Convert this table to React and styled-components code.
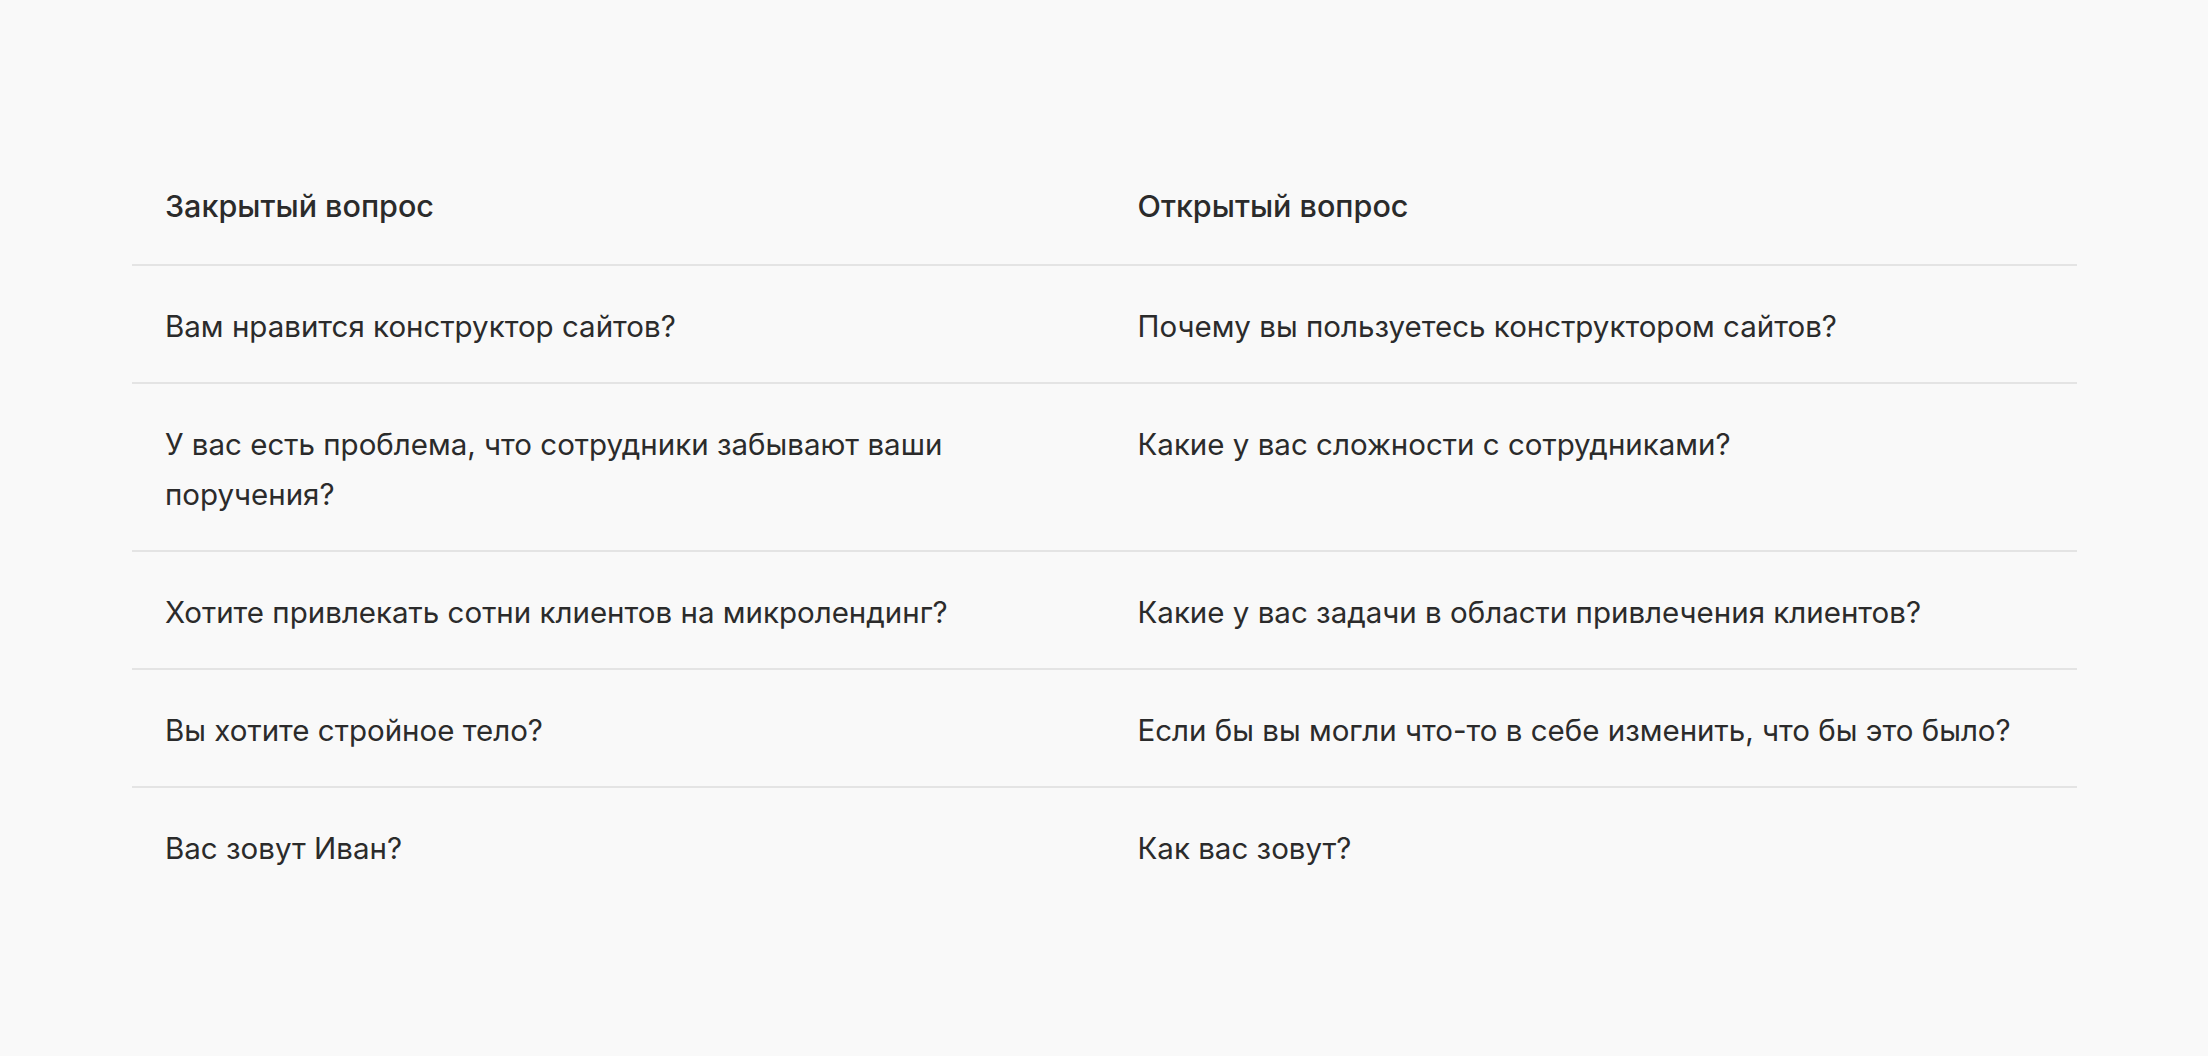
import React from 'react';
import styled, { createGlobalStyle } from 'styled-components';

const rows = [
  ['Вам нравится конструктор сайтов?', 'Почему вы пользуетесь конструктором сайтов?'],
  [
    <>У вас есть проблема, что сотрудники забывают ваши<br />поручения?</>,
    'Какие у вас сложности с сотрудниками?',
  ],
  ['Хотите привлекать сотни клиентов на микролендинг?', 'Какие у вас задачи в области привлечения клиентов?'],
  ['Вы хотите стройное тело?', 'Если бы вы могли что-то в себе изменить, что бы это было?'],
  ['Вас зовут Иван?', 'Как вас зовут?'],
];

const App = () => {
  return (
    <>
      <GlobalStyle />
      <StyledPage>
        <StyledTable>
          <StyledRow>
            <StyledHeadCell>Закрытый вопрос</StyledHeadCell>
            <StyledHeadCell>Открытый вопрос</StyledHeadCell>
          </StyledRow>
          {rows.map((row, i) => (
            <StyledRow key={i} $last={i === rows.length - 1}>
              <StyledCell>{row[0]}</StyledCell>
              <StyledCell>{row[1]}</StyledCell>
            </StyledRow>
          ))}
        </StyledTable>
      </StyledPage>
    </>
  );
};

const GlobalStyle = createGlobalStyle`
  body {
    margin: 0;
    background: #f9f9f9;
    font-family: Inter, 'Liberation Sans', sans-serif;
    color: #2b2b2b;
  }
`;

const StyledPage = styled.div`
  min-height: 1056px;
  padding: 148px 131px 0 132px;
  box-sizing: border-box;
`;

const StyledTable = styled.div`
  display: flex;
  flex-direction: column;
  width: 1945px;
`;

const StyledRow = styled.div`
  display: grid;
  grid-template-columns: 1fr 1fr;
  border-bottom: ${props => (props.$last ? 'none' : '2px solid #e4e4e4')};
`;

const StyledHeadCell = styled.div`
  padding: 33px 33px 33px 33px;
  font-size: 30.5px;
  font-weight: 500;
  line-height: 50px;
`;

const StyledCell = styled.div`
  padding: 35px 33px 31px 33px;
  font-size: 29.5px;
  font-weight: 400;
  line-height: 50px;
`;

export default App;
